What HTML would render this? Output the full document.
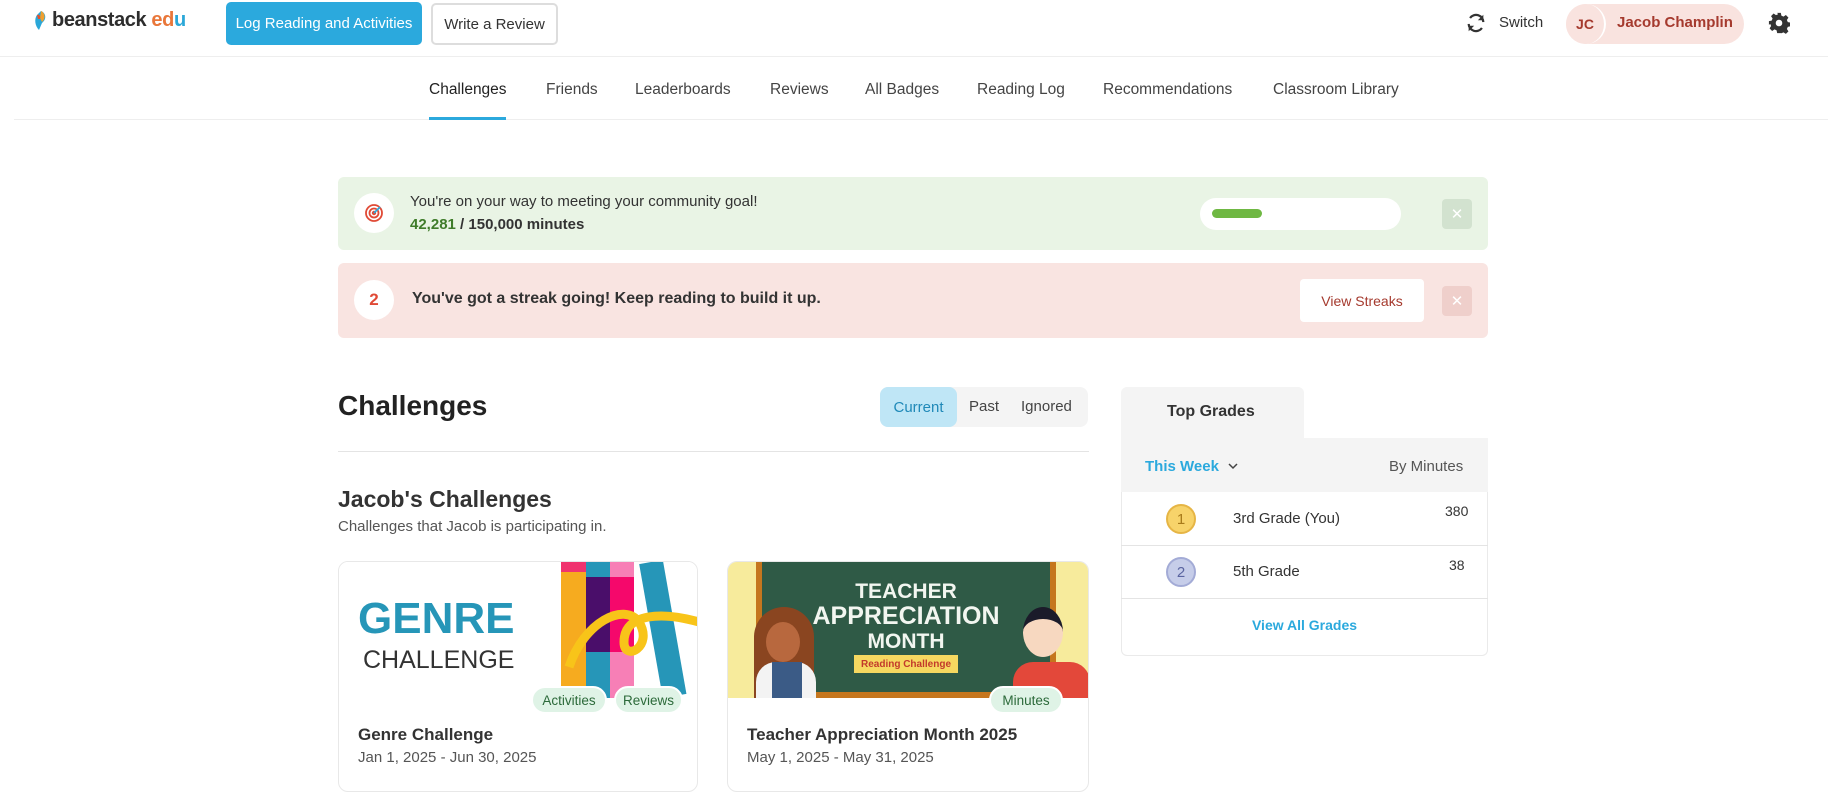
<!DOCTYPE html>
<html><head><meta charset="utf-8"><style>
*{box-sizing:border-box;margin:0;padding:0}
body{width:1828px;height:808px;overflow:hidden;background:#fff;font-family:"Liberation Sans",sans-serif;color:#333;position:relative}
.a{position:absolute}
.btn{position:absolute;border-radius:5px;font-size:15px;display:flex;align-items:center;justify-content:center}
.nav span{position:absolute;top:81px;font-size:15.5px;color:#444}
.pill{position:absolute;background:#dff3e6;color:#2c6a3a;border-radius:14px;font-size:13.5px;height:28px;display:flex;align-items:center;justify-content:center;border:2px solid #fff}
</style></head><body>
<!-- header -->
<div class="a" style="left:33px;top:10px;width:14px;height:20px">
<svg width="16" height="22" viewBox="0 0 16 22"><path d="M8 1 C13 3 14 9 9 13 L6 20 C2 16 1 9 4 5Z" fill="#2aa7d8"/><path d="M8 1 C12 3 13 8 9 12 L7 8Z" fill="#f0a030"/><path d="M4 5 C6 4 8 6 7 9 L5 9Z" fill="#e8502a"/></svg></div>
<div class="a" style="left:52px;top:9px;font-size:20px;font-weight:bold;color:#2d2d2d;letter-spacing:-0.4px">beanstack <span style="color:#e9773a">ed</span><span style="color:#2aa7d8">u</span></div>
<div class="btn" style="left:226px;top:2px;width:196px;height:43px;background:#2ba9dd;color:#fff">Log Reading and Activities</div>
<div class="btn" style="left:431px;top:3px;width:127px;height:42px;border:2px solid #ddd;color:#333">Write a Review</div>
<svg class="a" style="left:1465px;top:12px" width="22" height="22" viewBox="0 0 24 24" fill="none" stroke="#333" stroke-width="2.4"><path d="M20 11A8 8 0 0 0 5.5 6.5"/><path d="M4 13a8 8 0 0 0 14.5 4.5"/><path d="M20 3v6h-6z" fill="#333" stroke-width="0"/><path d="M4 21v-6h6z" fill="#333" stroke-width="0"/></svg>
<div class="a" style="left:1499px;top:14px;font-size:15px;color:#333">Switch</div>
<div class="a" style="left:1566px;top:4px;width:178px;height:40px;background:#f9e3df;border-radius:20px"></div>
<div class="a" style="left:1566px;top:4px;width:40px;height:40px;background:#f9e3df;border-radius:50%;border-right:2px solid #fff;color:#a53a2e;font-weight:bold;font-size:14px;display:flex;align-items:center;justify-content:center">JC</div>
<div class="a" style="left:1617px;top:14px;font-size:15px;font-weight:bold;color:#a53a2e">Jacob Champlin</div>
<svg class="a" style="left:1768px;top:12px" width="22" height="22" viewBox="0 0 24 24"><path fill="#333" d="M10 1h4l.6 3 2.3 1 2.6-1.7 2.8 2.8-1.7 2.6 1 2.3 3 .6v4l-3 .6-1 2.3 1.7 2.6-2.8 2.8-2.6-1.7-2.3 1L14 23h-4l-.6-3-2.3-1-2.6 1.7-2.8-2.8 1.7-2.6-1-2.3L1 14v-4l3-.6 1-2.3-1.7-2.6 2.8-2.8 2.6 1.7 2.3-1z"/><circle cx="12" cy="12" r="3.6" fill="#fff"/></svg>
<div class="a" style="left:0;top:56px;width:1828px;height:1px;background:#eee"></div>
<div class="nav">
<span style="left:429px;color:#222">Challenges</span><span style="left:546px">Friends</span><span style="left:635px">Leaderboards</span><span style="left:770px">Reviews</span><span style="left:865px">All Badges</span><span style="left:977px">Reading Log</span><span style="left:1103px">Recommendations</span><span style="left:1273px">Classroom Library</span></div>
<div class="a" style="left:14px;top:119px;width:1814px;height:1px;background:#eee"></div>
<div class="a" style="left:429px;top:117px;width:77px;height:3px;background:#2ba9dd"></div>
<!-- banners -->
<div class="a" style="left:338px;top:177px;width:1150px;height:73px;background:#e9f4e5;border-radius:6px"></div>
<div class="a" style="left:354px;top:193px;width:40px;height:40px;background:#fff;border-radius:50%"></div>
<svg class="a" style="left:364px;top:203px" width="20" height="20" viewBox="0 0 20 20" fill="none" stroke="#e04a36" stroke-width="1.8"><circle cx="10" cy="10" r="8"/><circle cx="10" cy="10" r="4.5"/><circle cx="10" cy="10" r="1.3" fill="#e04a36"/><path d="M10 10l6-6" stroke="#2ba9dd"/></svg>
<div class="a" style="left:410px;top:193px;font-size:15px;color:#333">You're on your way to meeting your community goal!</div>
<div class="a" style="left:410px;top:216px;font-size:15px;font-weight:bold;color:#333"><span style="color:#3f7c2a">42,281</span> / 150,000 minutes</div>
<div class="a" style="left:1200px;top:198px;width:201px;height:32px;background:#fff;border-radius:16px"></div>
<div class="a" style="left:1212px;top:209px;width:50px;height:9px;background:#6fb843;border-radius:5px"></div>
<div class="a" style="left:1442px;top:199px;width:30px;height:30px;background:#d2e2cf;border-radius:4px;color:#fff;font-size:15px;display:flex;align-items:center;justify-content:center">✕</div>
<div class="a" style="left:338px;top:263px;width:1150px;height:75px;background:#f9e4e1;border-radius:6px"></div>
<div class="a" style="left:354px;top:280px;width:40px;height:40px;background:#fff;border-radius:50%;color:#e04a36;font-weight:bold;font-size:17px;display:flex;align-items:center;justify-content:center">2</div>
<div class="a" style="left:412px;top:290px;font-size:16px;font-weight:bold;color:#333">You've got a streak going! Keep reading to build it up.</div>
<div class="a" style="left:1300px;top:279px;width:124px;height:43px;background:#fff;border-radius:4px;color:#a53a2e;font-size:14px;display:flex;align-items:center;justify-content:center">View Streaks</div>
<div class="a" style="left:1442px;top:286px;width:30px;height:30px;background:#efcfcb;border-radius:4px;color:#fff;font-size:15px;display:flex;align-items:center;justify-content:center">✕</div>
<!-- challenges -->
<div class="a" style="left:338px;top:390px;font-size:28px;font-weight:bold;color:#222">Challenges</div>
<div class="a" style="left:880px;top:387px;width:208px;height:40px;background:#f4f4f4;border-radius:8px"></div>
<div class="a" style="left:880px;top:387px;width:77px;height:40px;background:#bfe6f6;border-radius:8px;color:#1f89b8;font-size:15px;display:flex;align-items:center;justify-content:center">Current</div>
<div class="a" style="left:969px;top:398px;font-size:15px;color:#444">Past</div>
<div class="a" style="left:1021px;top:398px;font-size:15px;color:#444">Ignored</div>
<div class="a" style="left:338px;top:451px;width:751px;height:1px;background:#e4e4e4"></div>
<div class="a" style="left:338px;top:486px;font-size:23px;font-weight:bold;color:#333">Jacob's Challenges</div>
<div class="a" style="left:338px;top:518px;font-size:15px;color:#555">Challenges that Jacob is participating in.</div>
<!-- card1 -->
<div class="a" style="left:338px;top:561px;width:360px;height:231px;border:1px solid #e8e8e8;border-radius:10px;overflow:hidden">
 <div class="a" style="left:0;top:0;width:360px;height:136px;background:#fff"></div>
 <div class="a" style="left:19px;top:32px;font-size:44px;font-weight:bold;color:#2696b8;letter-spacing:0px">GENRE</div>
 <div class="a" style="left:24px;top:84px;font-size:25px;color:#333">CHALLENGE</div>
 <div class="a" style="left:222px;top:0;width:25px;height:136px;background:#f6ab1f"></div>
 <div class="a" style="left:222px;top:0;width:25px;height:10px;background:#f0336f"></div>
 <div class="a" style="left:247px;top:0;width:24px;height:136px;background:#4a0e6a"></div>
 <div class="a" style="left:247px;top:0;width:24px;height:15px;background:#2696b8"></div>
 <div class="a" style="left:247px;top:90px;width:24px;height:46px;background:#2696b8"></div>
 <div class="a" style="left:271px;top:0;width:24px;height:136px;background:#f5086b"></div>
 <div class="a" style="left:271px;top:0;width:24px;height:15px;background:#f77fb6"></div>
 <div class="a" style="left:271px;top:90px;width:24px;height:46px;background:#f77fb6"></div>
 <div class="a" style="left:300px;top:0;width:24px;height:136px;background:#2696b8;transform:rotate(-10deg);transform-origin:top"></div>
 <svg class="a" style="left:225px;top:30px" width="135" height="80"><path d="M5 75 C20 30 60 10 75 30 C90 55 60 70 60 50 C60 20 100 20 135 30" fill="none" stroke="#f8c419" stroke-width="9"/></svg>
 <div class="pill" style="left:192px;top:124px;width:76px">Activities</div>
 <div class="pill" style="left:275px;top:124px;width:69px">Reviews</div>
 <div class="a" style="left:19px;top:163px;font-size:17px;font-weight:bold;color:#333">Genre Challenge</div>
 <div class="a" style="left:19px;top:187px;font-size:15px;color:#555">Jan 1, 2025 - Jun 30, 2025</div>
</div>
<!-- card2 -->
<div class="a" style="left:727px;top:561px;width:362px;height:231px;border:1px solid #e8e8e8;border-radius:10px;overflow:hidden">
 <div class="a" style="left:0;top:0;width:362px;height:136px;background:#f7eb9c"></div>
 <div class="a" style="left:28px;top:0;width:300px;height:136px;background:#c5761e"></div>
 <div class="a" style="left:34px;top:0;width:288px;height:130px;background:#2f5a46"></div>
 <div class="a" style="left:34px;top:18px;width:288px;text-align:center;font-size:21px;font-weight:bold;color:#f2f6f0;line-height:24px">TEACHER<br><span style="font-size:25px">APPRECIATION</span><br>MONTH</div>
 <div class="a" style="left:126px;top:93px;width:104px;height:18px;background:#f6d860;color:#c2392b;font-size:10px;font-weight:bold;display:flex;align-items:center;justify-content:center">Reading Challenge</div>
 <div class="a" style="left:26px;top:45px;width:60px;height:91px;background:#8a4520;border-radius:30px 30px 0 0"></div>
 <div class="a" style="left:38px;top:60px;width:34px;height:40px;background:#b8683e;border-radius:50%"></div>
 <div class="a" style="left:28px;top:100px;width:60px;height:36px;background:#f3f3f3;border-radius:20px 20px 0 0"></div>
 <div class="a" style="left:44px;top:100px;width:30px;height:36px;background:#3b5b86"></div>
 <div class="a" style="left:295px;top:45px;width:40px;height:50px;background:#f7d8c0;border-radius:50%;border-top:12px solid #1b1b2a"></div>
 <div class="a" style="left:285px;top:100px;width:77px;height:36px;background:#e3483a;border-radius:20px 20px 0 0"></div>
 <div class="pill" style="left:261px;top:124px;width:74px">Minutes</div>
 <div class="a" style="left:19px;top:163px;font-size:17px;font-weight:bold;color:#333">Teacher Appreciation Month 2025</div>
 <div class="a" style="left:19px;top:187px;font-size:15px;color:#555">May 1, 2025 - May 31, 2025</div>
</div>
<!-- top grades -->
<div class="a" style="left:1121px;top:387px;width:183px;height:52px;background:#f4f4f4;border-radius:6px 6px 0 0"></div>
<div class="a" style="left:1167px;top:403px;font-size:16px;font-weight:bold;color:#333">Top Grades</div>
<div class="a" style="left:1121px;top:438px;width:367px;height:218px;border:1px solid #eaeaea;border-top:none;border-radius:0 0 6px 6px"></div>
<div class="a" style="left:1121px;top:438px;width:367px;height:54px;background:#f4f4f4"></div>
<div class="a" style="left:1145px;top:458px;font-size:15px;font-weight:bold;color:#2ba9dd">This Week</div>
<svg class="a" style="left:1228px;top:462px" width="10" height="8" viewBox="0 0 10 8"><path d="M1 2l4 4 4-4" fill="none" stroke="#444" stroke-width="1.5"/></svg>
<div class="a" style="left:1389px;top:458px;font-size:15px;color:#555">By Minutes</div>
<div class="a" style="left:1121px;top:545px;width:367px;height:1px;background:#e4e4e4"></div>
<div class="a" style="left:1121px;top:598px;width:367px;height:1px;background:#e4e4e4"></div>
<div class="a" style="left:1166px;top:504px;width:30px;height:30px;border-radius:50%;background:#f7d36a;border:2px solid #e6b545;color:#a87a1a;font-size:15px;display:flex;align-items:center;justify-content:center">1</div>
<div class="a" style="left:1233px;top:510px;font-size:15px;color:#333">3rd Grade (You)</div>
<div class="a" style="left:1445px;top:503px;font-size:14px;color:#333">380</div>
<div class="a" style="left:1166px;top:557px;width:30px;height:30px;border-radius:50%;background:#c6cde9;border:2px solid #a3abd6;color:#5a64a0;font-size:15px;display:flex;align-items:center;justify-content:center">2</div>
<div class="a" style="left:1233px;top:563px;font-size:15px;color:#333">5th Grade</div>
<div class="a" style="left:1449px;top:557px;font-size:14px;color:#333">38</div>
<div class="a" style="left:1121px;top:617px;width:367px;text-align:center;font-size:14px;font-weight:bold;color:#2ba9dd">View All Grades</div>
</body></html>
